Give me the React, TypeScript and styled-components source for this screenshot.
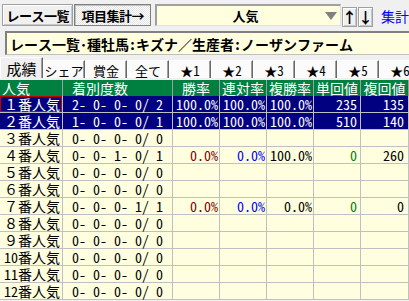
import styled, { createGlobalStyle, css } from "styled-components";

const FONT = `"Noto Sans Mono CJK JP", "Noto Sans CJK JP", "DejaVu Sans Mono", monospace`;

const GlobalStyle = createGlobalStyle`
  html, body {
    margin: 0;
    padding: 0;
    background: #f0f0f0;
    overflow: hidden;
  }
`;

const Screen = styled.div`
  width: 409px;
  height: 301px;
  overflow: hidden;
  display: flex;
  flex-direction: column;
  background: #f0f0f0;
  font-family: ${FONT};
  color: #000;
`;

const TopBar = styled.div`
  height: 31px;
  box-sizing: border-box;
  display: flex;
  align-items: center;
  padding: 0 0 1px 2px;
  white-space: nowrap;
  overflow: hidden;
`;

const raised = css`
  border: 1px solid #a0a0a0;
  box-shadow: inset 1px 1px 0 #fff, inset -1px -1px 0 #c8c8c8;
  background: #f0f0f0;
`;

const NavButton = styled.div<{ $pressed?: boolean }>`
  box-sizing: border-box;
  height: 22px;
  width: ${(p) => (p.$pressed ? 78 : 73)}px;
  margin-right: ${(p) => (p.$pressed ? 4 : 1)}px;
  display: flex;
  align-items: center;
  justify-content: center;
  font-size: 13px;
  font-weight: bold;
  letter-spacing: -0.5px;
  ${raised}
  ${(p) =>
    p.$pressed &&
    css`
      border-color: #808080;
      box-shadow: inset 1px 1px 0 #c0c0c0;
      background-color: #fff;
      background-image: repeating-conic-gradient(#fff 0 25%, #e4e4e4 0 50%);
      background-size: 2px 2px;
    `}
`;

const Dropdown = styled.div`
  box-sizing: border-box;
  position: relative;
  width: 190px;
  height: 22px;
  border-top: 2px solid #a0a0a0;
  border-left: 2px solid #a0a0a0;
  border-bottom: 1px solid #e0e0e0;
  border-right: 1px solid #e0e0e0;
  background: #ffffe0;
  display: flex;
  align-items: center;
  justify-content: center;
  font-size: 13px;
  font-weight: bold;
  padding-right: 6px;
`;

const DropArrow = styled.span`
  position: absolute;
  right: 3px;
  top: 6px;
  width: 0;
  height: 0;
  border-left: 6px solid transparent;
  border-right: 6px solid transparent;
  border-top: 8px solid #808080;
`;

const ArrowButton = styled.div`
  box-sizing: border-box;
  width: 15px;
  height: 20px;
  margin-top: 3px;
  margin-left: 1px;
  display: flex;
  align-items: center;
  justify-content: center;
  font-size: 15px;
  font-weight: bold;
  ${raised}
`;

const SumLink = styled.span`
  margin-left: 8px;
  margin-top: 2px;
  color: #0000ff;
  font-size: 14px;
`;

const TitleBox = styled.div`
  box-sizing: border-box;
  margin: 0 0 0 5px;
  height: 24px;
  border-top: 2px solid #808080;
  border-left: 2px solid #808080;
  border-bottom: 1px solid #c0c0c0;
  background: #ffffe0;
  display: flex;
  align-items: center;
  padding-left: 3px;
  font-size: 14px;
  font-weight: bold;
  white-space: nowrap;
  overflow: hidden;
`;

const TabStrip = styled.div`
  margin-top: 2px;
  height: 21px;
  display: flex;
  align-items: flex-end;
  white-space: nowrap;
  overflow: hidden;
`;

const Tab = styled.div<{ $active?: boolean }>`
  box-sizing: border-box;
  flex: 0 0 ${(p) => (p.$active ? 43 : 42)}px;
  height: ${(p) => (p.$active ? 21 : 18)}px;
  border-top: 1px solid #fff;
  border-left: 1px solid #fff;
  border-right: 1px solid #696969;
  box-shadow: inset -1px 0 0 #a0a0a0;
  background: ${(p) => (p.$active ? "#f0f0f0" : "#fbfbfb")};
  display: flex;
  align-items: center;
  justify-content: center;
  font-size: ${(p) => (p.$active ? 15 : 13)}px;
  line-height: 1;
  padding-top: ${(p) => (p.$active ? 0 : 1)}px;
  overflow: hidden;
`;

const Table = styled.div`
  margin-top: 2px;
  display: flex;
  flex-direction: column;
`;

const COLS = "63px 110px 47px 47px 47px 47px 48px";

const HeadRow = styled.div`
  display: grid;
  grid-template-columns: ${COLS};
  height: 16px;
  background: #008040;
  color: #fff;
`;

const HeadCell = styled.div<{ $align: string; $pad: number }>`
  box-sizing: border-box;
  border-right: 1px solid #a0a0a0;
  font-size: 14px;
  line-height: 16px;
  text-align: ${(p) => p.$align};
  padding-left: ${(p) => p.$pad}px;
  white-space: nowrap;
`;

const Row = styled.div<{ $selected?: boolean }>`
  display: grid;
  grid-template-columns: ${COLS};
  height: 17px;
  background: ${(p) => (p.$selected ? "#000080" : "#ffffe0")};
  color: ${(p) => (p.$selected ? "#fff" : "#000")};
`;

const Cell = styled.div<{ $align: string; $pad: number; $tone: string; $focus?: boolean }>`
  box-sizing: border-box;
  border-right: 1px solid #c0c0c0;
  border-bottom: 1px solid #c0c0c0;
  font-size: 14px;
  line-height: 16px;
  text-align: ${(p) => p.$align};
  padding: 0 ${(p) => p.$pad}px;
  color: ${(p) => p.$tone};
  white-space: pre;
  ${(p) =>
    p.$focus &&
    css`
      box-shadow: inset 0 0 0 1px #c00000;
    `}
`;

type Col = {
  key: "rank" | "count" | "win" | "ren" | "place" | "tan" | "fuku";
  title: string;
  headAlign: string;
  headPad: number;
  align: string;
  pad: number;
  tone: string;
};

const columns: Col[] = [
  { key: "rank", title: "人気", headAlign: "left", headPad: 2, align: "right", pad: 2, tone: "inherit" },
  { key: "count", title: "着別度数", headAlign: "left", headPad: 9, align: "left", pad: 9, tone: "inherit" },
  { key: "win", title: "勝率", headAlign: "center", headPad: 0, align: "right", pad: 1, tone: "#800000" },
  { key: "ren", title: "連対率", headAlign: "center", headPad: 0, align: "right", pad: 1, tone: "#0000ff" },
  { key: "place", title: "複勝率", headAlign: "center", headPad: 0, align: "right", pad: 1, tone: "#000" },
  { key: "tan", title: "単回値", headAlign: "center", headPad: 0, align: "right", pad: 3, tone: "#008000" },
  { key: "fuku", title: "複回値", headAlign: "center", headPad: 0, align: "right", pad: 4, tone: "#000" },
];

type Rec = Record<Col["key"], string> & { selected?: boolean };

const empty = (rank: string): Rec => ({
  rank,
  count: "0- 0- 0- 0/ 0",
  win: "",
  ren: "",
  place: "",
  tan: "",
  fuku: "",
});

const rows: Rec[] = [
  { rank: "１番人気", count: "2- 0- 0- 0/ 2", win: "100.0%", ren: "100.0%", place: "100.0%", tan: "235", fuku: "135", selected: true },
  { rank: "２番人気", count: "1- 0- 0- 0/ 1", win: "100.0%", ren: "100.0%", place: "100.0%", tan: "510", fuku: "140", selected: true },
  empty("３番人気"),
  { rank: "４番人気", count: "0- 0- 1- 0/ 1", win: "0.0%", ren: "0.0%", place: "100.0%", tan: "0", fuku: "260" },
  empty("５番人気"),
  empty("６番人気"),
  { rank: "７番人気", count: "0- 0- 0- 1/ 1", win: "0.0%", ren: "0.0%", place: "0.0%", tan: "0", fuku: "0" },
  empty("８番人気"),
  empty("９番人気"),
  empty("10番人気"),
  empty("11番人気"),
  empty("12番人気"),
];

const tabs = ["成績", "シェア", "賞金", "全て", "★1", "★2", "★3", "★4", "★5", "★6"];

export default function App() {
  return (
    <Screen>
      <GlobalStyle />
      <TopBar>
        <NavButton>レース一覧</NavButton>
        <NavButton $pressed>項目集計→</NavButton>
        <Dropdown>
          人気
          <DropArrow />
        </Dropdown>
        <ArrowButton>↑</ArrowButton>
        <ArrowButton>↓</ArrowButton>
        <SumLink>集計</SumLink>
      </TopBar>

      <TitleBox>レース一覧･種牡馬:キズナ／生産者:ノーザンファーム</TitleBox>

      <TabStrip>
        {tabs.map((t, i) => (
          <Tab key={t} $active={i === 0}>
            {t}
          </Tab>
        ))}
      </TabStrip>

      <Table>
        <HeadRow>
          {columns.map((c) => (
            <HeadCell key={c.key} $align={c.headAlign} $pad={c.headPad}>
              {c.title}
            </HeadCell>
          ))}
        </HeadRow>
        {rows.map((r, i) => (
          <Row key={r.rank} $selected={r.selected}>
            {columns.map((c) => (
              <Cell
                key={c.key}
                $align={c.align}
                $pad={c.pad}
                $tone={r.selected ? "#fff" : c.tone}
                $focus={i === 0 && c.key === "rank"}
              >
                {r[c.key]}
              </Cell>
            ))}
          </Row>
        ))}
      </Table>
    </Screen>
  );
}
